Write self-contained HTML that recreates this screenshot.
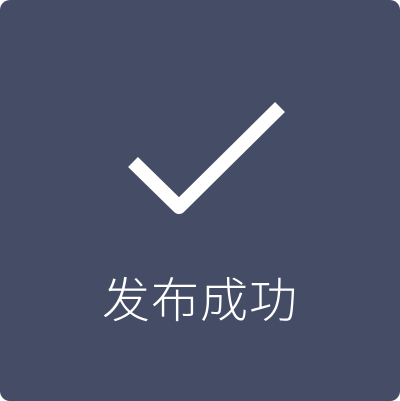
<!DOCTYPE html>
<html><head><style>
html,body{margin:0;padding:0;background:#fff;}
.box{position:absolute;left:0;top:0;width:400px;height:401px;background:#454d66;border-radius:10px;overflow:hidden;}
.t{position:absolute;left:0;width:400px;top:272px;text-align:center;color:#fff;font-family:"Liberation Sans","Noto Sans CJK SC",sans-serif;font-size:48px;font-weight:300;line-height:60px;letter-spacing:1px;}
</style></head><body>
<div class="box">
<svg width="400" height="401" style="position:absolute;left:0;top:0">
<path d="M133 162 L179 207 L280 107" fill="none" stroke="#fff" stroke-width="14" stroke-linejoin="round"/>
</svg>
<div class="t">发布成功</div>
</div>
</body></html>
